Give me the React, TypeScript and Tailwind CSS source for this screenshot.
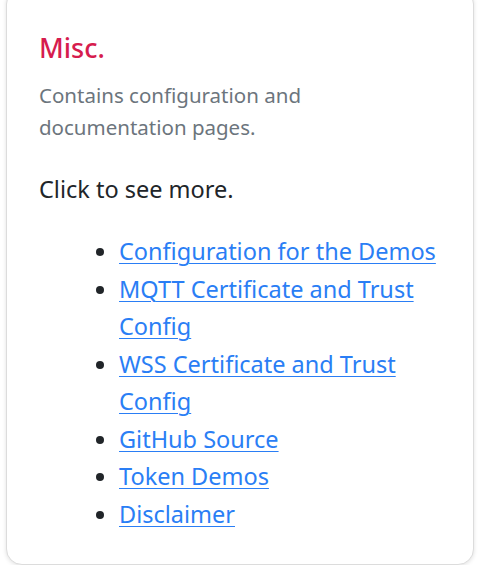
const links = [
  "Configuration for the Demos",
  "MQTT Certificate and Trust Config",
  "WSS Certificate and Trust Config",
  "GitHub Source",
  "Token Demos",
  "Disclaimer",
];

export default function App() {
  return (
    <div className="min-h-screen bg-white px-[6px] font-['Noto_Sans',sans-serif]">
      <div className="mt-[-12px] w-[468px] rounded-[16px] border border-[#dcdcdc] bg-white px-[32px] pt-[42px] pb-[31px] shadow-[0_1px_4px_rgba(0,0,0,0.12)]">
        <h5 className="text-[27px] leading-[34px] font-medium text-[#d61c4e]">
          Misc.
        </h5>

        <p className="mt-[14px] w-[300px] text-[20.5px] leading-[32px] text-[#6c757d]">
          Contains configuration and documentation pages.
        </p>

        <p className="mt-[28px] text-[23.5px] leading-[36px] text-[#212529]">
          Click to see more.
        </p>

        <ul className="mt-[26px] list-disc pl-[80px] text-[23.5px] leading-[37.5px] marker:text-[#212529]">
          {links.map((label) => (
            <li key={label}>
              <a
                href="#"
                className="text-[#2a7ef5] underline decoration-1 underline-offset-[3px]"
              >
                {label}
              </a>
            </li>
          ))}
        </ul>
      </div>
    </div>
  );
}
